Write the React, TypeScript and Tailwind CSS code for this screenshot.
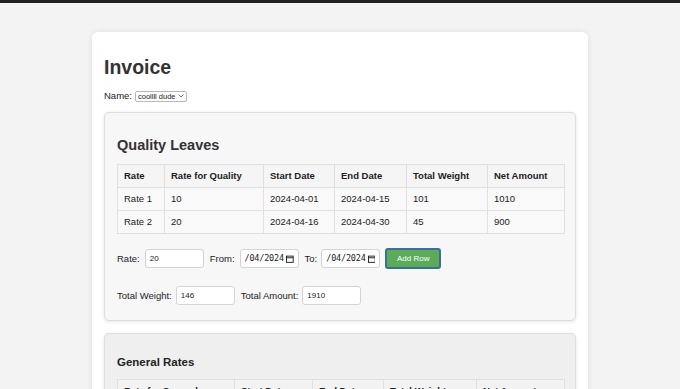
const rows = [
  { rate: "Rate 1", quality: "10", start: "2024-04-01", end: "2024-04-15", weight: "101", amount: "1010" },
  { rate: "Rate 2", quality: "20", start: "2024-04-16", end: "2024-04-30", weight: "45", amount: "900" },
];

function TextBox({ value }: { value: string }) {
  return (
    <div className="flex h-[19px] w-[59px] items-center rounded-[3px] border border-[#d4d4d4] bg-white px-[4px] text-[8px] text-[#222]">
      {value}
    </div>
  );
}

function DateBox() {
  return (
    <div className="flex h-[19px] w-[59px] items-center gap-[2px] rounded-[3px] border border-[#d4d4d4] bg-white px-[4px] font-['DejaVu_Sans_Mono',monospace] text-[8.5px] text-[#222]">
      <span className="tracking-[-0.2px]">/04/2024</span>
      <svg width="8" height="8" viewBox="0 0 8 8" fill="none" className="ml-auto">
        <rect x="0.5" y="1" width="7" height="6.5" stroke="#222" strokeWidth="1" />
        <line x1="0.5" y1="2.7" x2="7.5" y2="2.7" stroke="#222" strokeWidth="1" />
      </svg>
    </div>
  );
}

const th = "border border-[#e0e0e0] pl-[6px] text-left font-bold";
const td = "border border-[#e0e0e0] pl-[6px]";

export default function App() {
  return (
    <div className="min-h-[389px] bg-[#f3f3f3] font-['Liberation_Sans',Arial,sans-serif] text-[#222]">
      <div className="h-[3px] bg-[#222]" />
      <div className="mx-auto mt-[29px] w-[496px] rounded-[6px] bg-white px-[12px] pb-[20px] pt-[23px] shadow-[0_0_6px_rgba(0,0,0,0.09)]">
        <h1 className="text-[19.5px] font-bold leading-[24px] text-[#333]">Invoice</h1>
        <div className="mt-[10px] flex items-center gap-[3px] text-[9.5px]">
          <span>Name:</span>
          <div className="flex h-[11px] items-center gap-[2px] rounded-[2px] border border-[#b8b8b8] bg-white px-[2px] text-[7.5px]">
            coollll dude
            <svg width="6" height="4" viewBox="0 0 6 4" fill="none">
              <path d="M0.5 0.5 L3 3 L5.5 0.5" stroke="#555" strokeWidth="0.8" />
            </svg>
          </div>
        </div>

        <div className="mt-[9px] rounded-[5px] border border-[#dedede] bg-[#f7f7f7] px-[12px] pb-[15px] pt-[22px] shadow-[0_1px_4px_rgba(0,0,0,0.1)]">
          <h2 className="text-[14.5px] font-bold leading-[20px] text-[#333]">Quality Leaves</h2>
          <table className="mt-[9px] w-[448px] border-collapse text-[9.5px]">
            <thead>
              <tr className="h-[23px] bg-[#f5f5f5]">
                <th className={`w-[47px] ${th}`}>Rate</th>
                <th className={`w-[99px] ${th}`}>Rate for Quality</th>
                <th className={`w-[71px] ${th}`}>Start Date</th>
                <th className={`w-[72px] ${th}`}>End Date</th>
                <th className={`w-[81px] ${th}`}>Total Weight</th>
                <th className={th}>Net Amount</th>
              </tr>
            </thead>
            <tbody>
              {rows.map((r) => (
                <tr key={r.rate} className="h-[23px] bg-[#f9f9f9]">
                  <td className={td}>{r.rate}</td>
                  <td className={td}>{r.quality}</td>
                  <td className={td}>{r.start}</td>
                  <td className={td}>{r.end}</td>
                  <td className={td}>{r.weight}</td>
                  <td className={td}>{r.amount}</td>
                </tr>
              ))}
            </tbody>
          </table>

          <div className="mt-[14px] flex items-center text-[9.5px]">
            <span>Rate:</span>
            <div className="ml-[5px]">
              <TextBox value="20" />
            </div>
            <span className="ml-[6px]">From:</span>
            <div className="ml-[5px]">
              <DateBox />
            </div>
            <span className="ml-[6px]">To:</span>
            <div className="ml-[4px]">
              <DateBox />
            </div>
            <button className="ml-[5px] h-[21px] w-[56px] rounded-[3px] border-2 border-[#3f6e93] bg-[#5cab5a] text-[8px] text-white">
              Add Row
            </button>
          </div>

          <div className="mt-[17px] flex items-center text-[9.5px]">
            <span>Total Weight:</span>
            <div className="ml-[4px]">
              <TextBox value="146" />
            </div>
            <span className="ml-[6px]">Total Amount:</span>
            <div className="ml-[4px]">
              <TextBox value="1910" />
            </div>
          </div>
        </div>

        <div className="mt-[12px] rounded-[5px] border border-[#dedede] bg-[#efefef] px-[12px] pb-[20px] pt-[21px] shadow-[0_1px_4px_rgba(0,0,0,0.1)]">
          <h2 className="text-[11.5px] font-bold leading-[14px] text-[#222]">General Rates</h2>
          <table className="mt-[10px] w-[448px] border-collapse text-[9.5px]">
            <thead>
              <tr className="h-[23px] bg-[#f2f2f2]">
                <th className={`w-[117px] ${th}`}>Rate for General</th>
                <th className={`w-[78px] ${th}`}>Start Date</th>
                <th className={`w-[71px] ${th}`}>End Date</th>
                <th className={`w-[93px] ${th}`}>Total Weight</th>
                <th className={th}>Net Amount</th>
              </tr>
            </thead>
          </table>
        </div>
      </div>
    </div>
  );
}
